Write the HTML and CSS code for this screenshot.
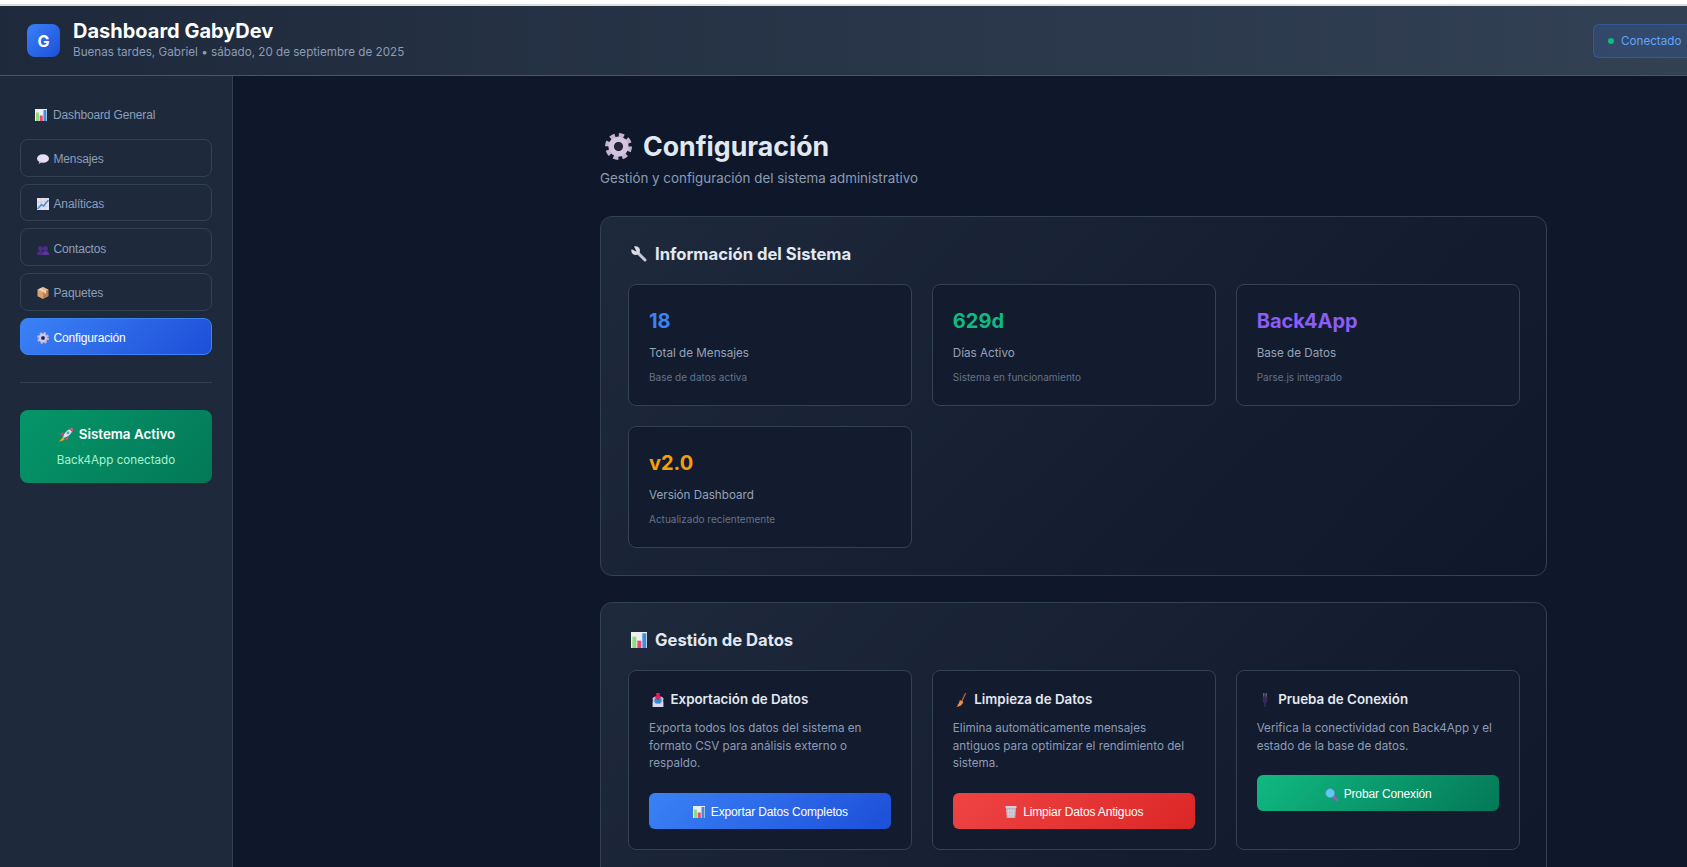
FILE: index.html
```html
<!DOCTYPE html>
<html lang="es">
<head>
<meta charset="utf-8">
<title>Dashboard GabyDev</title>
<link rel="stylesheet" href="styles.css">
</head>
<body>
<svg class="defs" width="0" height="0" aria-hidden="true">
  <symbol id="i-chart" viewBox="0 0 24 24">
    <rect x="0" y="0" width="24" height="24" fill="#eceef3"/>
    <rect x="2" y="7" width="6" height="17" fill="#8fdc7a"/>
    <rect x="9.500" y="13" width="6" height="11" fill="#f0437a"/>
    <rect x="17" y="2" width="6" height="22" fill="#3f8fd8"/>
  </symbol>
  <symbol id="i-bubble" viewBox="0 0 24 24">
    <ellipse cx="12" cy="11" rx="12" ry="8.500" fill="#e9dcf5"/>
    <path d="M5 16l-2 6 8-4z" fill="#c9b6dc"/>
  </symbol>
  <symbol id="i-trend" viewBox="0 0 24 24">
    <rect x="0" y="0" width="24" height="24" fill="#e4e2ee"/>
    <path d="M0 8h24M0 16h24M8 0v24M16 0v24" stroke="#bdbccd" stroke-width="1"/>
    <path d="M1 22l8-9 4 3 10-12" fill="none" stroke="#3f88d8" stroke-width="2.800"/>
  </symbol>
  <symbol id="i-people" viewBox="0 0 24 24">
    <circle cx="7" cy="11" r="5" fill="#4b2d86"/>
    <circle cx="17" cy="11" r="5" fill="#4b2d86"/>
    <path d="M0 24c0-6 3-8 7-8s7 2 7 8z" fill="#4b2d86"/>
    <path d="M11 24c0-6 2-8 6-8s7 2 7 8z" fill="#5a3796"/>
  </symbol>
  <symbol id="i-box" viewBox="0 0 24 24">
    <path d="M12 0l11 5.500v13L12 24z" fill="#b8804f"/>
    <path d="M12 0L1 5.500v13L12 24z" fill="#d9a173"/>
    <path d="M1 5.500L12 11 23 5.500 12 0z" fill="#e6bb92"/>
    <path d="M7 2.500l11 5.500v4.500l-3 1.500v-4.500L4 4z" fill="#f0d9bd"/>
  </symbol>
  <symbol id="i-gear" viewBox="0 0 24 24">
    <circle cx="12" cy="12" r="10.300" fill="none" stroke="#c5b3d6" stroke-width="3.400" stroke-dasharray="4.600 3.490"/>
    <circle cx="12" cy="12" r="6.500" fill="none" stroke="#d3c5e0" stroke-width="5"/>
    <circle cx="12" cy="12" r="3.400" fill="#2a2438"/>
  </symbol>
  <symbol id="i-rocket" viewBox="0 0 24 24">
    <path d="M7 17C8 8 15 2 24 0c-1 9-8 16-17 17z" fill="#dfe2ea"/>
    <path d="M17 1.500c2 0 6-1 7-1.500 0 2-.5 5-1.500 7z" fill="#ef3f6c"/>
    <circle cx="15.500" cy="8.500" r="2.400" fill="#4aa3df"/>
    <path d="M9 7L2 10l4 4zM17 15l-3 7-4-4z" fill="#ef3f6c"/>
    <path d="M6 16l-6 8 8-3 2-2z" fill="#f59a23"/>
  </symbol>
  <symbol id="i-wrench" viewBox="0 0 24 24">
    <path d="M8 8l13 13" stroke="#c8c9d4" stroke-width="4.400" stroke-linecap="round"/>
    <circle cx="7" cy="7" r="6.500" fill="#dadbe3"/>
    <path d="M-1 3.500L3.500 -1 8.500 8.500z" fill="#151e31"/>
  </symbol>
  <symbol id="i-inbox" viewBox="0 0 24 24">
    <path d="M3 9l2-2h14l2 2v15H3z" fill="#cfc8e0"/>
    <rect x="6" y="9" width="12" height="9" fill="#2f8bd6"/>
    <path d="M3 16h4l1 3h8l1-3h4v8H3z" fill="#dcd7ea"/>
    <path d="M9 0h6v5h4l-7 8-7-8h4z" fill="#dd1f5b"/>
  </symbol>
  <symbol id="i-broom" viewBox="0 0 24 24">
    <path d="M20 0L13 15" stroke="#a8683a" stroke-width="2.200"/>
    <path d="M10 12l6 3c-1 4-4 8-12 9 2-1 3-3 2-4 2-1 3-4 4-8z" fill="#f08a4b"/>
  </symbol>
  <symbol id="i-plug" viewBox="0 0 24 24">
    <path d="M9 0h2v7H9zM13 0h2v7h-2z" fill="#77728a"/>
    <path d="M8 6h8v9l-2.500 3v6h-3v-6L8 15z" fill="#36275c"/>
  </symbol>
  <symbol id="i-search" viewBox="0 0 24 24">
    <path d="M15 15l7 7" stroke="#9b5bc0" stroke-width="5" stroke-linecap="round"/>
    <circle cx="9.500" cy="9.500" r="8.500" fill="#62c8f0" stroke="#4a90b8" stroke-width="1.500"/>
  </symbol>
  <symbol id="i-trash" viewBox="0 0 24 24">
    <path d="M1 0h22v4H1z" fill="#d6cbd6"/>
    <path d="M2 4h20l-1.500 20h-17z" fill="#bfb2c2"/>
    <path d="M7 6l1 17M12 6v17M17 6l-1 17M3 10h18M4 16h16" stroke="#e7dfe8" stroke-width="1.200"/>
  </symbol>
</svg>

<div class="browser-edge"></div>

<header class="topbar">
  <div class="brand">
    <div class="logo">G</div>
    <div class="brand-text">
      <h1 class="brand-title">Dashboard GabyDev</h1>
      <p class="brand-sub">Buenas tardes, Gabriel • sábado, 20 de septiembre de 2025</p>
    </div>
  </div>
  <div class="status-pill"><span class="status-dot"></span>Conectado</div>
</header>

<div class="shell">
  <aside class="sidebar">
    <nav class="nav">
      <button class="nav-item nav-plain"><svg class="ico ico-nav"><use href="#i-chart"/></svg>Dashboard General</button>
      <button class="nav-item"><svg class="ico ico-nav"><use href="#i-bubble"/></svg>Mensajes</button>
      <button class="nav-item"><svg class="ico ico-nav"><use href="#i-trend"/></svg>Analíticas</button>
      <button class="nav-item"><svg class="ico ico-nav"><use href="#i-people"/></svg>Contactos</button>
      <button class="nav-item"><svg class="ico ico-nav"><use href="#i-box"/></svg>Paquetes</button>
      <button class="nav-item nav-active"><svg class="ico ico-nav"><use href="#i-gear"/></svg>Configuración</button>
    </nav>
    <div class="side-divider"></div>
    <div class="system-card">
      <div class="system-title"><svg class="ico ico-rocket"><use href="#i-rocket"/></svg>Sistema Activo</div>
      <div class="system-sub">Back4App conectado</div>
    </div>
  </aside>

  <main class="main">
    <div class="content">
      <h2 class="page-title"><svg class="ico ico-page"><use href="#i-gear"/></svg>Configuración</h2>
      <p class="page-sub">Gestión y configuración del sistema administrativo</p>

      <section class="panel">
        <h3 class="panel-title"><svg class="ico ico-panel-s"><use href="#i-wrench"/></svg>Información del Sistema</h3>
        <div class="grid">
          <div class="stat">
            <div class="stat-value c-blue">18</div>
            <div class="stat-label">Total de Mensajes</div>
            <div class="stat-note">Base de datos activa</div>
          </div>
          <div class="stat">
            <div class="stat-value c-green">629d</div>
            <div class="stat-label">Días Activo</div>
            <div class="stat-note">Sistema en funcionamiento</div>
          </div>
          <div class="stat">
            <div class="stat-value c-purple">Back4App</div>
            <div class="stat-label">Base de Datos</div>
            <div class="stat-note">Parse.js integrado</div>
          </div>
          <div class="stat">
            <div class="stat-value c-orange">v2.0</div>
            <div class="stat-label">Versión Dashboard</div>
            <div class="stat-note">Actualizado recientemente</div>
          </div>
        </div>
      </section>

      <section class="panel panel-data">
        <h3 class="panel-title"><svg class="ico ico-panel"><use href="#i-chart"/></svg>Gestión de Datos</h3>
        <div class="grid">
          <div class="action">
            <h4 class="action-title"><svg class="ico ico-action"><use href="#i-inbox"/></svg>Exportación de Datos</h4>
            <p class="action-text">Exporta todos los datos del sistema en formato CSV para análisis externo o respaldo.</p>
            <button class="btn btn-blue"><svg class="ico ico-btn"><use href="#i-chart"/></svg>Exportar Datos Completos</button>
          </div>
          <div class="action">
            <h4 class="action-title"><svg class="ico ico-action"><use href="#i-broom"/></svg>Limpieza de Datos</h4>
            <p class="action-text">Elimina automáticamente mensajes antiguos para optimizar el rendimiento del sistema.</p>
            <button class="btn btn-red"><svg class="ico ico-btn"><use href="#i-trash"/></svg>Limpiar Datos Antiguos</button>
          </div>
          <div class="action">
            <h4 class="action-title"><svg class="ico ico-action"><use href="#i-plug"/></svg>Prueba de Conexión</h4>
            <p class="action-text">Verifica la conectividad con Back4App y el estado de la base de datos.</p>
            <button class="btn btn-green"><svg class="ico ico-search"><use href="#i-search"/></svg>Probar Conexión</button>
          </div>
        </div>
      </section>
    </div>
  </main>
</div>
</body>
</html>
```
FILE: styles.css
```css
* { box-sizing: border-box; }
html, body { height: 100%; }
body {
  margin: 0;
  height: 867px;
  overflow: hidden;
  background: #0f172a;
  color: #e2e8f0;
  font-family: Inter, "Liberation Sans", sans-serif;
}
.defs { display: block; height: 0; }
.ico { display: inline-block; flex: none; }

.browser-edge {
  height: 6px;
  background: #fff;
  border-bottom: 2px solid #dcdcdc;
}

.topbar {
  width: 1703px;
  height: 70px;
  padding: 0 0 0 27px;
  display: flex;
  align-items: center;
  justify-content: space-between;
  background: linear-gradient(90deg, #1e293b, #334155);
  border-bottom: 1px solid #475569;
}
.brand { display: flex; align-items: center; gap: 13px; }
.brand-text { padding-bottom: 2.500px; }
.logo {
  width: 33px;
  height: 33px;
  border-radius: 8px;
  display: flex;
  align-items: center;
  justify-content: center;
  font-size: 16px;
  font-weight: 700;
  color: #fff;
  background: linear-gradient(135deg, #3b82f6, #1d4ed8);
}
.brand-title {
  margin: 0 0 1.500px;
  font-size: 20px;
  line-height: 24px;
  font-weight: 700;
  color: #fff;
}
.brand-sub {
  margin: 0;
  font-size: 11.66px;
  line-height: 15px;
  color: #8b9cb5;
}
.status-pill {
  width: 110px;
  height: 34px;
  padding-left: 14px;
  display: flex;
  align-items: center;
  gap: 7px;
  font-size: 11.66px;
  color: #60a5fa;
  background: rgba(59, 130, 246, .15);
  border: 1px solid rgba(59, 130, 246, .3);
  border-radius: 6px;
}
.status-dot { width: 6px; height: 6px; border-radius: 50%; background: #10b981; }

.shell { display: flex; height: 791px; }
.sidebar {
  width: 233px;
  flex: none;
  padding: 20px 20px 0;
  background: #1e293b;
  border-right: 1px solid #334155;
}
.nav { display: flex; flex-direction: column; gap: 7.100px; }
.nav-item {
  height: 37.6px;
  padding: 2.500px 15px 0 16px;
  display: flex;
  align-items: center;
  gap: 4.500px;
  font-family: "Liberation Sans", Arial, sans-serif;
  font-size: 12px;
  letter-spacing: -0.150px;
  color: #8b9fbc;
  text-align: left;
  background: transparent;
  border: 1px solid #334155;
  border-radius: 8px;
}
.nav-plain { height: 36px; border: 0; padding: 1px 15px 0; gap: 6px; }
.nav-active {
  color: #fff;
  background: linear-gradient(135deg, #3b82f6, #1d4ed8);
  border-color: #3b82f6;
}
.ico-nav { width: 12px; height: 12px; }
.side-divider { height: 1px; margin-top: 27px; background: #334155; }
.system-card {
  height: 73px;
  margin-top: 27px;
  padding-top: 16px;
  text-align: center;
  border-radius: 8px;
  background: linear-gradient(135deg, #059669, #047857);
}
.system-title {
  padding-left: 2px;
  display: flex;
  align-items: center;
  justify-content: center;
  gap: 6px;
  font-size: 13.4px;
  line-height: 17px;
  font-weight: 600;
  color: #fff;
}
.ico-rocket { width: 14px; height: 14px; }
.system-sub { margin-top: 10px; font-size: 11.66px; line-height: 15px; color: #a7f3d0; }

.main { flex: 1; min-width: 0; padding-left: 367px; background: #0f172a; }
.content { width: 947px; }
.page-title {
  margin: 0;
  padding: 53px 0 0 5px;
  display: flex;
  align-items: center;
  gap: 11px;
  font-size: 26.7px;
  line-height: 34px;
  font-weight: 700;
  color: #e2e8f0;
}
.ico-page { width: 27px; height: 27px; }
.page-sub { margin: 7px 0 0; font-size: 13.36px; line-height: 17px; color: #8b9cb5; }

.panel {
  margin-top: 29px;
  padding: 27px 26.500px 27px 27px;
  background: linear-gradient(135deg, #1e293b, #0f172a);
  border: 1px solid #334155;
  border-radius: 12px;
}
.panel-data { margin-top: 26px; padding-bottom: 60px; }
.panel-title {
  margin: 0 0 20px;
  padding-left: 3px;
  display: flex;
  align-items: center;
  gap: 8px;
  font-size: 16.640px;
  line-height: 20px;
  font-weight: 700;
  color: #e2e8f0;
}
.ico-panel-s { width: 16px; height: 16px; }
.ico-panel { width: 16px; height: 16px; }
.grid { display: grid; grid-template-columns: repeat(3, 1fr); gap: 20px; }
.stat {
  height: 122px;
  padding: 24px 20px 0;
  background: #131b2e;
  border: 1px solid #334155;
  border-radius: 8px;
}
.stat-value { font-size: 20px; line-height: 24px; font-weight: 700; }
.c-blue { color: #3b82f6; }
.c-green { color: #10b981; }
.c-purple { color: #8b5cf6; }
.c-orange { color: #f59e0b; }
.stat-label { margin-top: 13px; font-size: 11.66px; line-height: 15px; color: #94a3b8; }
.stat-note { margin-top: 10px; font-size: 10px; line-height: 12px; color: #64748b; }

.action {
  height: 180px;
  padding: 20px 20px 0;
  background: #131b2e;
  border: 1px solid #334155;
  border-radius: 8px;
}
.action-title {
  margin: 0;
  padding-left: 1.500px;
  display: flex;
  align-items: center;
  gap: 6px;
  font-size: 13.33px;
  line-height: 17px;
  font-weight: 600;
  color: #e2e8f0;
}
.ico-action { width: 14px; height: 14px; }
.action-text { margin: 12px 0 20px; font-size: 11.66px; line-height: 17.6px; color: #8b9cb5; }
.btn {
  width: 100%;
  height: 36px;
  padding: 2px 0 0 1px;
  display: flex;
  align-items: center;
  justify-content: center;
  gap: 6px;
  font-family: "Liberation Sans", Arial, sans-serif;
  font-size: 12px;
  letter-spacing: -0.150px;
  color: #fff;
  border: 0;
  border-radius: 6px;
}
.ico-btn { width: 12px; height: 12px; }
.ico-search { width: 13px; height: 13px; }
.btn-blue { background: linear-gradient(135deg, #3b82f6, #1d4ed8); }
.btn-red { background: linear-gradient(135deg, #ef4444, #dc2626); }
.btn-green { background: linear-gradient(135deg, #10b981, #047857); }
```
